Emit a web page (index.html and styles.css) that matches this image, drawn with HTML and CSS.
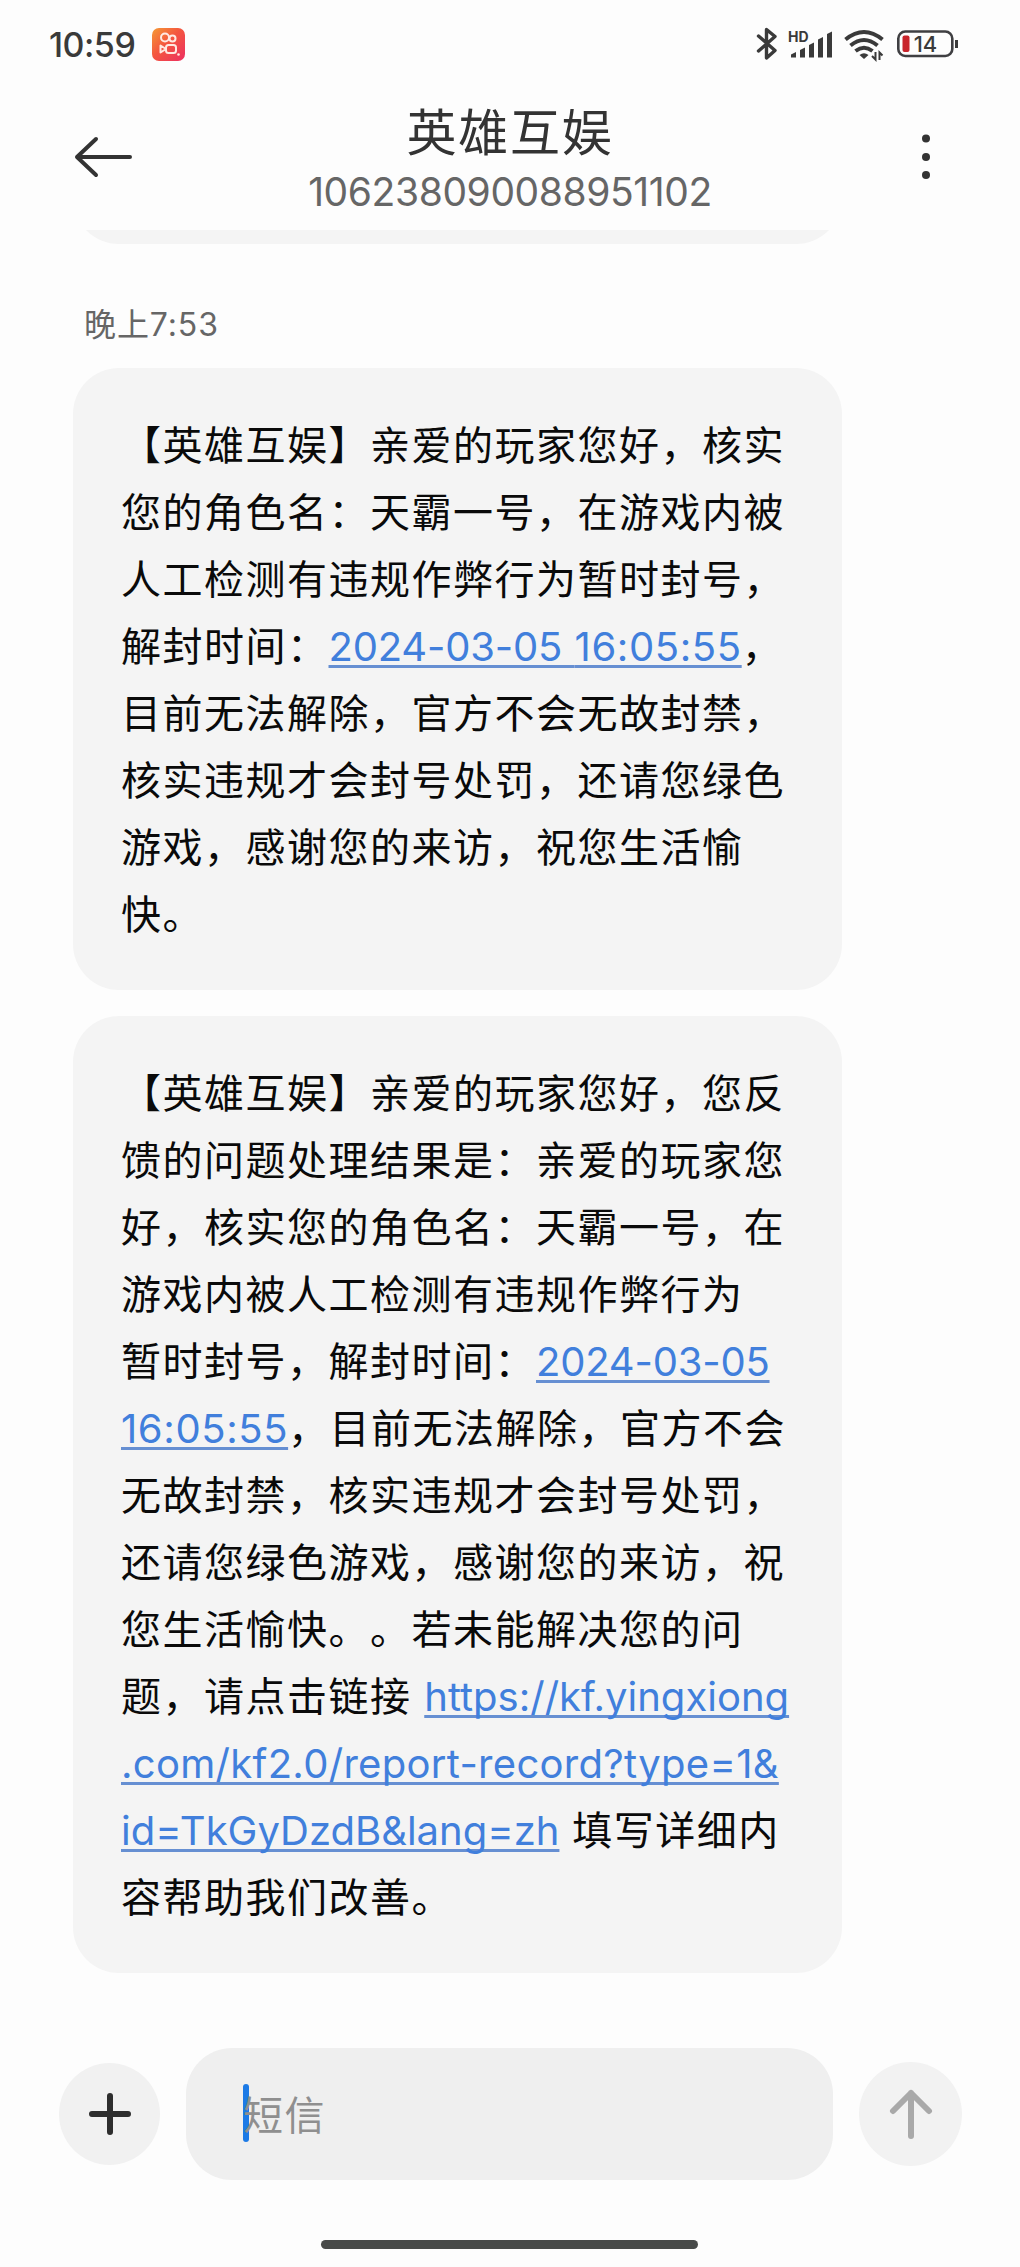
FILE: index.html
```
<!DOCTYPE html>
<html lang="zh-CN">
<head>
  <meta charset="UTF-8">
  <meta name="viewport" content="width=device-width, initial-scale=1.0">
  <title>英雄互娱</title>
  <link rel="stylesheet" href="styles.css">
</head>
<body>

  <div class="status-bar">
    <span class="clock">10:59</span>
    <svg class="app-icon" width="33" height="33" viewBox="0 0 33 33">
      <defs>
        <linearGradient id="appBg" x1="0" y1="0" x2="1" y2="1">
          <stop offset="0" stop-color="#f59a35"/>
          <stop offset="0.45" stop-color="#f4563f"/>
          <stop offset="1" stop-color="#ec2f62"/>
        </linearGradient>
      </defs>
      <rect width="33" height="33" rx="7" fill="url(#appBg)"/>
      <g fill="none" stroke="#ffe9e2" stroke-width="2">
        <circle cx="13" cy="9.5" r="4"/>
        <circle cx="20.5" cy="10.5" r="3"/>
        <rect x="14" y="17" width="10" height="8" rx="2.5"/>
        <path d="M14 21L8.500 17.500V24.500Z" stroke-linejoin="round"/>
      </g>
      <circle cx="26.500" cy="26.500" r="1.300" fill="#ffe9e2"/>
    </svg>
    <svg class="status-icons" width="206" height="36" viewBox="0 0 206 36">
      <!-- bluetooth -->
      <path d="M3.5 10L20 24.500L11.500 32V3.500L20 10.500L3.500 25" fill="none" stroke="#3a3a3a" stroke-width="3.400" stroke-linejoin="round" stroke-linecap="round"/>
      <!-- signal -->
      <text class="hd" x="33" y="15.500">HD</text>
      <path d="M36 31.500V28.500L41 26V31.500ZM45 31.500V24L50 21.500V31.500ZM54 31.500V19L59 16.500V31.500ZM63 31.500V13.500L68 11V31.500ZM72 31.500V8L77 5.500V31.500Z" fill="#3a3a3a"/>
      <!-- wifi -->
      <g fill="none" stroke="#3a3a3a" stroke-width="4">
        <path d="M90.500 13.500Q109 -1.500 127.500 13.500"/>
        <path d="M95.500 19.500Q109 8.500 122.500 19.500"/>
        <path d="M100.500 25Q109 18.500 117.500 25"/>
      </g>
      <path d="M104.500 29Q109 25.500 113.500 29L109 33Z" fill="#3a3a3a"/>
      <path d="M120.500 26V33.500L117 30M124.500 34V26.500L127.500 29.500" fill="none" stroke="#3a3a3a" stroke-width="2"/>
      <!-- battery -->
      <rect x="143.300" y="5.500" width="54" height="24.500" rx="7" fill="none" stroke="#3f3f42" stroke-width="2.600"/>
      <rect x="147.500" y="9.500" width="7" height="16.500" rx="2" fill="#c8242b"/>
      <path d="M201.500 14V22" stroke="#3a3a3a" stroke-width="3"/>
      <text class="battery-level" x="170.500" y="25.500">14</text>
    </svg>
  </div>

  <header class="header">
    <svg width="60" height="44" viewBox="0 0 60 44" class="back">
      <path d="M57 22H4M23 4L4 22L23 40" fill="none" stroke="#333" stroke-width="4" stroke-linecap="round" stroke-linejoin="round"/>
    </svg>
    <div class="contact">
      <h1>英雄互娱</h1>
      <div class="number">106238090088951102</div>
    </div>
    <svg width="12" height="48" viewBox="0 0 12 48" class="more">
      <g fill="#333">
        <circle cx="6" cy="5.500" r="4"/>
        <circle cx="6" cy="24" r="4"/>
        <circle cx="6" cy="42" r="4"/>
      </g>
    </svg>
  </header>

  <main class="messages">
    <div class="previous"><div class="bubble"></div></div>
    <div class="time">晚上7:53</div>
    <div class="bubble">【英雄互娱】亲爱的玩家您好，核实<br>您的角色名：天霸一号，在游戏内被<br>人工检测有违规作弊行为暂时封号，<br>解封时间：<a class="date">2024-03-05 <span class="clock-time">16:05:55</span></a>，<br>目前无法解除，官方不会无故封禁，<br>核实违规才会封号处罚，还请您绿色<br>游戏，感谢您的来访，祝您生活愉<br>快。</div>
    <div class="bubble">【英雄互娱】亲爱的玩家您好，您反<br>馈的问题处理结果是：亲爱的玩家您<br>好，核实您的角色名：天霸一号，在<br>游戏内被人工检测有违规作弊行为<br>暂时封号，解封时间：<a class="date">2024-03-05<br><span class="clock-time">16:05:55</span></a>，目前无法解除，官方不会<br>无故封禁，核实违规才会封号处罚，<br>还请您绿色游戏，感谢您的来访，祝<br>您生活愉快。。若未能解决您的问<br>题，请点击链接 <a class="url">https://kf.yingxiong<br><span class="url-path">.com/kf2.0/report-record?type=1&amp;</span><br>id=TkGyDzdB&amp;lang=zh</a> 填写详细内<br>容帮助我们改善。</div>
  </main>

  <footer class="composer">
    <div class="add">
      <svg width="44" height="44" viewBox="0 0 44 44">
        <path d="M22 4V40M4 22H40" stroke="#2e2e2e" stroke-width="6" stroke-linecap="round"/>
      </svg>
    </div>
    <div class="input"><span class="caret"></span>短信</div>
    <div class="send">
      <svg width="44" height="52" viewBox="0 0 44 52">
        <path d="M22 48V5M4 23L22 5L40 23" fill="none" stroke="#a9a9a9" stroke-width="6" stroke-linecap="round" stroke-linejoin="round"/>
      </svg>
    </div>
  </footer>
  <div class="home-bar"></div>

</body>
</html>
```
FILE: styles.css
```
* {
  box-sizing: border-box;
}

body {
  margin: 0;
  width: 1020px;
  height: 2267px;
  display: flex;
  flex-direction: column;
  background-color: #fdfdfd;
  font-family: Inter, "Noto Sans CJK SC", sans-serif;
  text-spacing-trim: space-all;
  overflow: hidden;
}

svg {
  display: block;
  flex: none;
}

/* Status bar */
.status-bar {
  display: flex;
  align-items: center;
  height: 88px;
  padding: 0 59px 0 49px;
}

.clock {
  width: 103px;
  font-size: 34px;
  font-weight: 500;
  letter-spacing: -0.5px;
  color: #3a3a3a;
  white-space: nowrap;
}

.status-icons {
  margin-left: auto;
}

.hd {
  font-size: 14px;
  font-weight: 700;
  fill: #3a3a3a;
}

.battery-level {
  font-size: 22px;
  font-weight: 500;
  text-anchor: middle;
  fill: #3a3a3a;
}

/* Header */
.header {
  display: flex;
  align-items: center;
  justify-content: space-between;
  height: 142px;
  padding: 0 88px 4px 73px;
}

.contact {
  display: flex;
  flex-direction: column;
  align-items: center;
  width: 500px;
  margin-left: -33px;
}

h1 {
  margin: 2px 0 -2px;
  font-size: 50px;
  line-height: 70px;
  font-weight: 400;
  letter-spacing: 1.8px;
  color: #333;
}

.number {
  font-size: 39px;
  line-height: 52px;
  letter-spacing: -0.4px;
  color: #666;
}

/* Messages */
.messages {
  display: flex;
  flex-direction: column;
  padding-left: 73px;
}

.previous {
  display: flex;
  align-items: flex-end;
  height: 14px;
  overflow: hidden;
}

.time {
  height: 124px;
  padding: 57px 0 0 11px;
  font-size: 32px;
  line-height: 48px;
  letter-spacing: 0.9px;
  color: #666;
}

.bubble {
  width: 769px;
  margin-bottom: 26px;
  padding: 44px 0 42px 48px;
  border-radius: 46px;
  background-color: #f4f4f4;
  font-size: 40px;
  line-height: 67px;
  letter-spacing: 1.5px;
  color: #0a0a0a;
  white-space: nowrap;
}

.previous .bubble {
  height: 100px;
  margin: 0;
  padding: 0;
}

.bubble a {
  color: #417fdc;
  text-decoration: underline;
  text-decoration-color: #668fd2;
  text-decoration-thickness: 3px;
  text-underline-offset: 4px;
  text-decoration-skip-ink: none;
}

.date {
  letter-spacing: -0.2px;
  word-spacing: 1.5px;
}

.clock-time {
  letter-spacing: 0.6px;
}

.url {
  letter-spacing: 0;
}

.url-path {
  letter-spacing: 0.3px;
}

/* Message input */
.composer {
  display: flex;
  align-items: center;
  height: 132px;
  margin-top: 49px;
  padding-left: 59px;
}

.add,
.send {
  display: flex;
  align-items: center;
  justify-content: center;
  flex: none;
  border-radius: 50%;
}

.add {
  width: 101px;
  height: 102px;
  background-color: #f1f1f1;
}

.input {
  display: flex;
  align-items: center;
  width: 647px;
  height: 132px;
  margin: 0 26px;
  padding: 0 0 2px 57px;
  border-radius: 46px;
  background-color: #efefef;
  font-size: 40px;
  letter-spacing: 1.5px;
  color: #8f8f8f;
}

.caret {
  width: 6px;
  height: 58px;
  margin-right: -6px;
  border-radius: 3px;
  background-color: #1c7ae6;
}

.send {
  width: 103px;
  height: 104px;
  background-color: #f2f2f2;
}

.home-bar {
  width: 377px;
  height: 9px;
  margin: 60px 0 0 321px;
  border-radius: 5px;
  background-color: #484a49;
}
```
